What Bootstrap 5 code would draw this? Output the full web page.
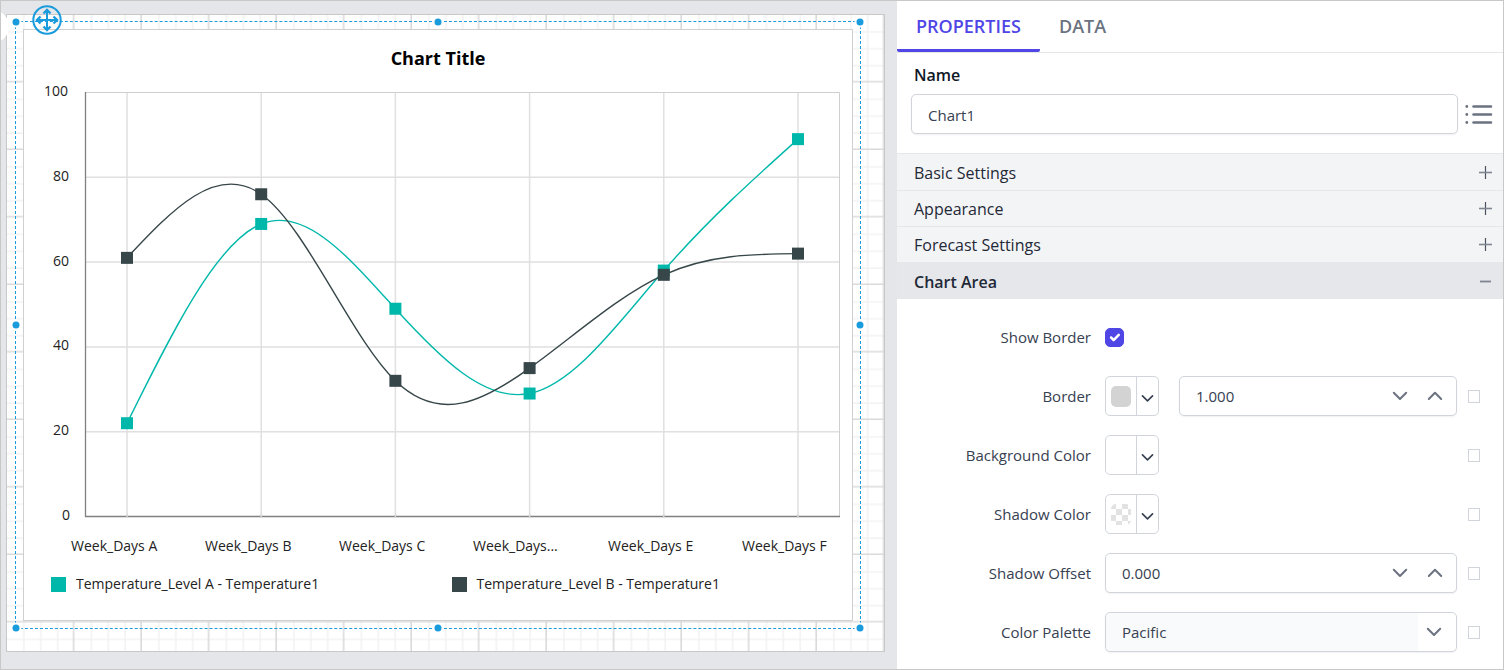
<!DOCTYPE html>
<html lang="en">
<head>
<meta charset="utf-8">
<meta name="viewport" content="width=device-width, initial-scale=1">
<title>Report Designer</title>
<link href="https://cdn.jsdelivr.net/npm/bootstrap@5.3.0/dist/css/bootstrap.min.css" rel="stylesheet">
<style>
  :root { --ink: #111827; --ink-soft: #374151; --muted: #6b7280; --line: #d1d5db; --hair: #e5e7eb; --accent: #4f46e5; --select: #1a9bdc; }
  body { font-family: "Open Sans", "Noto Sans", sans-serif; font-size: 15px; color: var(--ink-soft); background: #fff; }
  .designer { min-height: 100vh; border: 1px solid #c8c8c8; }
  .workspace { background: #e5e6ea; padding: 13px 12px 17px 5px; min-width: 0; overflow: hidden; }
  .inspector { flex: 0 0 606px; min-width: 0; background: #fff; }

  /* Report page and the selected chart */
  .surface { background: #fff; border: 1px solid #c8c8c8; padding: 14px 31px 30px 16px; }
  .surface-grid { inset: 0; width: 100%; height: 100%; }
  .chart-item { background: #fff; border: 1px solid #d0d0d0; color: #000; }
  .chart-title { font-size: 18px; line-height: 27px; font-weight: 700; padding: 15px 0 8px; }
  .chart-plot text { font-size: 14px; fill: #222; }
  .chart-key { font-size: 14px; line-height: 24px; padding: 12px 0 24px 27px; color: #222; }
  .key-item { gap: 10px; }
  .swatch { width: 15px; height: 15px; }
  .outline { inset: -9px; border: 1px dashed var(--select); pointer-events: none; }
  .grip { width: 7px; height: 7px; border-radius: 50%; background: var(--select); box-shadow: 0 0 0 2px #fff; }
  .mover { left: 16px; top: -17px; width: 30px; height: 30px; }
  .drawer-knob { left: -21px; top: 10px; width: 29px; height: 31px; border-radius: 50%; background: #fff; z-index: 1; }

  /* Property panel */
  .panel-tabs { border-bottom: 1px solid var(--hair); }
  .panel-tabs .nav-link { font-size: 18px; line-height: 26px; font-weight: 600; color: var(--muted); padding: 12px 19px 10px; border-radius: 0; border-bottom: 3px solid transparent; }
  .panel-tabs .nav-link.active { color: var(--accent); border-bottom-color: var(--accent); border-radius: 2px; }
  .name-label { font-size: 16px; line-height: 24px; font-weight: 600; color: var(--ink); padding: 10px 17px 7px; }
  .name-row { padding: 0 10px 19px 14px; gap: 7px; }
  .field { height: 40px; min-width: 0; border: 1px solid var(--line); border-radius: 5px; background: #fff; box-shadow: 0 1px 2px rgba(0, 0, 0, .06); }
  .field input, .field select, input.field { font-size: 15px; color: var(--ink-soft); padding: 1px 16px 0; }
  .field input, .field select { width: 100%; border: 0; background: transparent; min-width: 0; outline: 0; }
  .bare { flex: none; border: 0; background: transparent; padding: 0; color: var(--muted); line-height: 1; }
  .group-head { border: 0; border-top: 1px solid var(--hair); background: #f3f4f6; color: #1f2937; font-size: 16px; line-height: 24px; height: 36px; padding: 1px 9px 0 17px; }
  .group-head:first-child { height: 37px; }
  .group-head.open { background: var(--hair); font-weight: 600; height: 37px; }
  .props { padding: 18px 23px 12px 14px; gap: 19px; }
  .prop { height: 40px; }
  .prop > label { flex: 0 0 180px; text-align: right; margin-right: 14px; line-height: 24px; }
  .prop .form-check-input { width: 19px; height: 19px; border-radius: 5px; margin: 0; }
  .prop .form-check-input:checked { background-color: var(--accent); border-color: var(--accent); }
  .expr { appearance: none; width: 12px; height: 13px; border: 1px solid var(--line); margin: 0 0 0 11px; flex: none; background: #fff; }
  .color-btn { flex: none; width: 54px; height: 40px; padding: 0; border: 1px solid var(--line); border-radius: 5px; background: #fff; color: var(--ink-soft); }
  .beside { margin-left: 20px; }
  .chip-cell { width: 31px; height: 100%; border-right: 1px solid var(--line); }
  .chip { width: 20px; height: 21px; border-radius: 5px; }
  .chip-grey { background: #d3d3d3; }
  .chip-none { background: repeating-conic-gradient(#fff 0 25%, #e2e2e2 0 50%) 5px 5px / 12px 12px; }
  .spin { width: 35px; height: 100%; }
  .palette select { appearance: none; background: #f9fafb; border-radius: 5px; height: 100%; padding-right: 44px; }
  .palette-arrow { top: 0; right: 0; width: 38px; height: 38px; background: #fff; border-radius: 0 5px 5px 0; padding-right: 6px; color: var(--muted); pointer-events: none; }
</style>
</head>
<body>
<svg class="d-none" aria-hidden="true">
  <symbol id="down" viewBox="0 0 16 16"><path d="M1.800 4.800 8 11l6.200-6.200" fill="none" stroke="currentColor" stroke-width="2" stroke-linecap="round" stroke-linejoin="round"/></symbol>
  <symbol id="up" viewBox="0 0 16 16"><path d="M1.800 11 8 4.800 14.200 11" fill="none" stroke="currentColor" stroke-width="2" stroke-linecap="round" stroke-linejoin="round"/></symbol>
  <symbol id="plus" viewBox="0 0 16 16"><path d="M7.500 1v13" fill="none" stroke="#4b5260" stroke-width="1.200"/><path d="M1 7.500h13" fill="none" stroke="#7f868f" stroke-width="1.600"/></symbol>
  <symbol id="minus" viewBox="0 0 16 16"><path d="M2 7.500h11" fill="none" stroke="#7f868f" stroke-width="1.800"/></symbol>
</svg>

<div class="designer d-flex">
  <main class="workspace flex-grow-1 position-relative">
    <span class="drawer-knob position-absolute"></span>
    <div class="surface position-relative">
      <svg class="surface-grid position-absolute" aria-hidden="true">
        <defs>
          <pattern id="cells" width="67.500" height="67.500" patternUnits="userSpaceOnUse">
            <path d="M16.900 0v67.500M33.800 0v67.500M50.700 0v67.500M0 16.900h67.500M0 33.800h67.500M0 50.700h67.500" stroke="#f3f3f3" stroke-width="1.600"/>
            <path d="M66.700 0v67.500M0 66.700h67.500" stroke="#dadada" stroke-width="1.600"/>
          </pattern>
        </defs>
        <rect width="100%" height="100%" fill="url(#cells)"/>
      </svg>

      <div class="chart-item position-relative">
        <h1 class="chart-title text-center m-0">Chart Title</h1>
        <svg class="chart-plot d-block w-100" viewBox="0 0 828 480" role="img" aria-label="Temperature by week day">
          <g stroke="#e0e0e0" stroke-width="1.500" fill="none">
            <path d="M103 12v425M237.200 12v425M371.400 12v425M505.600 12v425M639.800 12v425M774 12v425"/>
            <path d="M61 97.300h754M61 182h754M61 267h754M61 351.700h754"/>
          </g>
          <path d="M61 12.500h754.500V437" fill="none" stroke="#cfcfcf"/>
          <path d="M61.500 12v424.500H816" fill="none" stroke="#808080" stroke-width="1.300"/>
          <g stroke="#d8d8d8" stroke-width="1.500"><path d="M103 434v4M237.200 434v4M371.400 434v4M505.600 434v4M639.800 434v4M774 434v4"/></g>
          <g text-anchor="end">
            <text x="44" y="16">100</text><text x="45" y="101">80</text><text x="45" y="186">60</text>
            <text x="45" y="270">40</text><text x="45" y="355">20</text><text x="46" y="440">0</text>
          </g>
          <g>
            <text x="47" y="471">Week_Days A</text><text x="181" y="471">Week_Days B</text><text x="315" y="471">Week_Days C</text>
            <text x="449" y="471">Week_Days...</text><text x="584" y="471">Week_Days E</text><text x="718" y="471">Week_Days F</text>
          </g>
          <g id="series"></g>
        </svg>
        <div class="chart-key d-flex">
          <div class="key-item w-50 d-flex align-items-center"><span class="swatch" style="background:#00b8aa"></span><span>Temperature_Level A - Temperature1</span></div>
          <div class="key-item w-50 d-flex align-items-center"><span class="swatch" style="background:#374649"></span><span>Temperature_Level B - Temperature1</span></div>
        </div>

        <div class="outline position-absolute">
          <span class="grip position-absolute top-0 start-0 translate-middle"></span>
          <span class="grip position-absolute top-0 start-50 translate-middle"></span>
          <span class="grip position-absolute top-0 start-100 translate-middle"></span>
          <span class="grip position-absolute top-50 start-0 translate-middle"></span>
          <span class="grip position-absolute top-50 start-100 translate-middle"></span>
          <span class="grip position-absolute top-100 start-0 translate-middle"></span>
          <span class="grip position-absolute top-100 start-50 translate-middle"></span>
          <span class="grip position-absolute top-100 start-100 translate-middle"></span>
          <svg class="mover position-absolute" viewBox="0 0 30 30" fill="none" stroke="#1a9bdc">
            <circle cx="15" cy="15" r="13.700" stroke-width="2"/>
            <path d="M15 6v18M6 15h18" stroke-width="2"/>
            <path d="M11.500 8.500 15 5l3.500 3.500M11.500 21.500l3.500 3.500 3.500-3.500M8.500 11.500 5 15l3.500 3.500M21.500 11.500l3.500 3.500-3.500 3.500" stroke-width="2.400"/>
          </svg>
        </div>
      </div>
    </div>
  </main>

  <aside class="inspector">
    <nav class="panel-tabs nav">
      <a class="nav-link active" href="#properties">PROPERTIES</a>
      <a class="nav-link" href="#data">DATA</a>
    </nav>

    <label class="name-label d-block" for="item-name">Name</label>
    <div class="name-row d-flex align-items-center">
      <input id="item-name" class="field flex-grow-1" type="text" value="Chart1">
      <button class="bare" type="button" aria-label="Item list">
        <svg class="d-block" width="28" height="22" viewBox="0 0 28 22" stroke="currentColor" stroke-linecap="round">
          <path d="M8.500 3.500h17.500M8.500 11.500h17.500M8.500 19.500h17.500" stroke-width="2.600"/>
          <path d="M1.800 3.500h.01M1.800 11.500h.01M1.800 19.500h.01" stroke-width="2.800"/>
        </svg>
      </button>
    </div>

    <div class="d-flex flex-column">
      <button class="group-head d-flex align-items-center justify-content-between" type="button">Basic Settings<svg width="16" height="16"><use href="#plus"/></svg></button>
      <button class="group-head d-flex align-items-center justify-content-between" type="button">Appearance<svg width="16" height="16"><use href="#plus"/></svg></button>
      <button class="group-head d-flex align-items-center justify-content-between" type="button">Forecast Settings<svg width="16" height="16"><use href="#plus"/></svg></button>
      <button class="group-head open d-flex align-items-center justify-content-between" type="button" aria-expanded="true">Chart Area<svg width="16" height="16"><use href="#minus"/></svg></button>
    </div>

    <form class="props d-flex flex-column">
      <div class="prop d-flex align-items-center">
        <label for="show-border">Show Border</label>
        <input id="show-border" class="form-check-input" type="checkbox" checked>
      </div>
      <div class="prop d-flex align-items-center">
        <label for="border-width">Border</label>
        <button class="color-btn d-flex align-items-center" type="button" aria-label="Border color">
          <span class="chip-cell d-flex align-items-center justify-content-center"><span class="chip chip-grey"></span></span>
          <svg class="mx-auto mt-1" width="13" height="13"><use href="#down"/></svg>
        </button>
        <div class="field beside d-flex align-items-center flex-grow-1 pe-1">
          <input id="border-width" type="text" value="1.000">
          <button class="bare spin" type="button" aria-label="Decrease"><svg width="16" height="16"><use href="#down"/></svg></button>
          <button class="bare spin" type="button" aria-label="Increase"><svg width="16" height="16"><use href="#up"/></svg></button>
        </div>
        <input class="expr" type="checkbox" aria-label="Border expression">
      </div>
      <div class="prop d-flex align-items-center">
        <label for="back-color">Background Color</label>
        <button id="back-color" class="color-btn d-flex align-items-center" type="button">
          <span class="chip-cell"></span>
          <svg class="mx-auto mt-1" width="13" height="13"><use href="#down"/></svg>
        </button>
        <input class="expr ms-auto" type="checkbox" aria-label="Background color expression">
      </div>
      <div class="prop d-flex align-items-center">
        <label for="shadow-color">Shadow Color</label>
        <button id="shadow-color" class="color-btn d-flex align-items-center" type="button">
          <span class="chip-cell d-flex align-items-center justify-content-center"><span class="chip chip-none"></span></span>
          <svg class="mx-auto mt-1" width="13" height="13"><use href="#down"/></svg>
        </button>
        <input class="expr ms-auto" type="checkbox" aria-label="Shadow color expression">
      </div>
      <div class="prop d-flex align-items-center">
        <label for="shadow-offset">Shadow Offset</label>
        <div class="field d-flex align-items-center flex-grow-1 pe-1">
          <input id="shadow-offset" type="text" value="0.000">
          <button class="bare spin" type="button" aria-label="Decrease"><svg width="16" height="16"><use href="#down"/></svg></button>
          <button class="bare spin" type="button" aria-label="Increase"><svg width="16" height="16"><use href="#up"/></svg></button>
        </div>
        <input class="expr" type="checkbox" aria-label="Shadow offset expression">
      </div>
      <div class="prop d-flex align-items-center">
        <label for="palette">Color Palette</label>
        <div class="field palette flex-grow-1 position-relative">
          <select id="palette"><option>Pacific</option></select>
          <span class="palette-arrow position-absolute d-flex align-items-center justify-content-center"><svg width="16" height="16"><use href="#down"/></svg></span>
        </div>
        <input class="expr" type="checkbox" aria-label="Color palette expression">
      </div>
    </form>
  </aside>
</div>

<script>
  // Natural cubic spline through evenly spaced points, as Bezier segments.
  function splinePath(xs, ys) {
    const n = ys.length, m = Array(n).fill(0), c = Array(n).fill(0), d = Array(n).fill(0);
    for (let i = 1; i < n - 1; i++) {
      const p = 4 - c[i - 1];
      c[i] = 1 / p;
      d[i] = (6 * (ys[i + 1] - 2 * ys[i] + ys[i - 1]) - d[i - 1]) / p;
    }
    for (let i = n - 2; i > 0; i--) m[i] = d[i] - c[i] * m[i + 1];
    let path = `M${xs[0]} ${ys[0]}`;
    for (let i = 0; i < n - 1; i++) {
      const h = (xs[i + 1] - xs[i]) / 3, dy = ys[i + 1] - ys[i];
      const s0 = dy - (2 * m[i] + m[i + 1]) / 6, s1 = dy + (m[i] + 2 * m[i + 1]) / 6;
      path += `C${xs[i] + h} ${ys[i] + s0 / 3} ${xs[i + 1] - h} ${ys[i + 1] - s1 / 3} ${xs[i + 1]} ${ys[i + 1]}`;
    }
    return path;
  }
  const series = [
    { color: '#00b8aa', values: [22, 69, 49, 29, 58, 89] },
    { color: '#374649', values: [61, 76, 32, 35, 57, 62] }
  ];
  document.getElementById('series').innerHTML = series.map(s => {
    const xs = s.values.map((v, i) => 103 + 134.2 * i), ys = s.values.map(v => 436.5 - 4.24 * v);
    return `<path d="${splinePath(xs, ys)}" fill="none" stroke="${s.color}" stroke-width="1.4"/>` +
      xs.map((x, i) => `<rect x="${x - 6}" y="${ys[i] - 6}" width="12" height="12" fill="${s.color}"/>`).join('');
  }).join('');
</script>
<script src="https://cdn.jsdelivr.net/npm/bootstrap@5.3.0/dist/js/bootstrap.bundle.min.js"></script>
</body>
</html>
